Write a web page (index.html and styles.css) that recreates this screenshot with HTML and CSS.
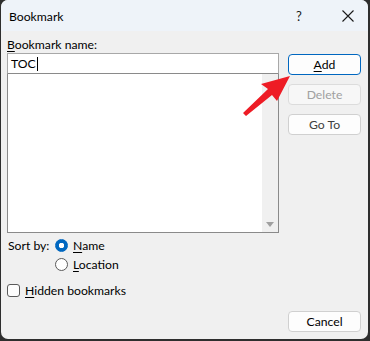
FILE: index.html
```html
<!DOCTYPE html>
<html>
<head>
  <meta charset="utf-8" />
  <title>Bookmark</title>
  <link rel="stylesheet" href="styles.css">
</head>
<body>
<div class="dialog">
  <div class="titlebar">
    <span class="title">Bookmark</span>
    <span class="help">?</span>
    <span class="close">
      <svg width="12" height="12" viewBox="0 0 12 12"><path d="M0.5 0.5 L11.5 11.5 M11.5 0.5 L0.5 11.5" stroke="#1a1a1a" stroke-width="1.1" fill="none"/></svg>
    </span>
  </div>
  <div class="content">
    <div class="main">
      <div class="label"><u>B</u>ookmark name:</div>
      <div class="nameInput">TOC<span class="caret"></span></div>
      <div class="listBox">
        <div class="listArea"></div>
        <div class="scrollbar"><span class="downArrow"></span></div>
      </div>
      <div class="sortBy">
        <div class="sortLabel">Sort by:</div>
        <div class="radios">
          <label class="radio"><span class="radioDot checked"></span><span><u>N</u>ame</span></label>
          <label class="radio"><span class="radioDot"></span><span><u>L</u>ocation</span></label>
        </div>
      </div>
      <label class="check"><span class="checkBox"></span><span><u>H</u>idden bookmarks</span></label>
    </div>
    <div class="buttons">
      <button class="btn primary"><u>A</u>dd</button>
      <button class="btn disabled">Delete</button>
      <button class="btn goto">Go To</button>
      <div class="spacer"></div>
      <button class="btn">Cancel</button>
    </div>
  </div>
</div>
<svg class="arrow" width="370" height="341" viewBox="0 0 370 341">
  <polygon points="290,76 261,84 268,89 243,113 246,116 272,95 277,101" fill="#ee1c25"/>
</svg>
</body>
</html>
```

FILE: styles.css
```css
body {
  margin: 0;
  background: #2e2e2e;
  font-family: Lato, "Noto Sans", sans-serif;
  font-size: 12.2px;
  color: #000;
}

.dialog {
  width: 367px;
  height: 339px;
  margin-left: 1px;
  background: #f0f0f0;
  border-radius: 7px;
  overflow: hidden;
  display: flex;
  flex-direction: column;
}

.titlebar {
  height: 31px;
  flex: none;
  background: #eef3f9;
  display: flex;
  align-items: center;
  padding-left: 8px;
}

.title {
  flex: 1;
  padding-top: 1px;
}

.help {
  font-size: 13px;
  width: 12px;
  margin-right: 34px;
  color: #1a1a1a;
}

.close {
  width: 12px;
  height: 12px;
  margin-right: 14px;
  display: flex;
}

.content {
  flex: 1;
  display: flex;
  padding: 6px 6px 7px 6px;
  gap: 9px;
}

.main {
  width: 272px;
  display: flex;
  flex-direction: column;
}

.label {
  height: 16px;
  line-height: 16px;
}

u {
  text-decoration-thickness: 1px;
  text-underline-offset: 2px;
}

.nameInput {
  height: 19px;
  background: #fff;
  border: 1px solid #a8a8a8;
  border-bottom-color: #8a8a8a;
  line-height: 19px;
  padding-left: 3px;
  display: flex;
  align-items: center;
}

.caret {
  width: 1px;
  height: 14px;
  background: #000;
  margin-left: 1px;
}

.listBox {
  height: 158px;
  border: 1px solid #8a8a8a;
  border-top: none;
  display: flex;
}

.listArea {
  flex: 1;
  background: #fff;
}

.scrollbar {
  width: 16px;
  background: #f0f0f0;
  display: flex;
  align-items: flex-end;
  justify-content: center;
  padding-bottom: 5px;
  box-sizing: border-box;
}

.downArrow {
  width: 0;
  height: 0;
  border-left: 4px solid transparent;
  border-right: 4px solid transparent;
  border-top: 5px solid #a0a0a0;
}

.sortBy {
  display: flex;
  margin-top: 3px;
  margin-left: 1px;
}

.sortLabel {
  width: 47px;
  line-height: 19px;
}

.radios {
  display: flex;
  flex-direction: column;
}

.radio {
  display: flex;
  align-items: center;
  gap: 5px;
  height: 19px;
}

.radioDot {
  width: 11px;
  height: 11px;
  border: 1px solid #5a5a5a;
  border-radius: 50%;
  box-sizing: content-box;
  background: #fff;
}

.radioDot.checked {
  border-color: #0067c0;
  background: radial-gradient(circle, #fff 0 2.5px, #0067c0 3px);
}

.check {
  display: flex;
  align-items: center;
  gap: 5px;
  margin-top: 7px;
  height: 19px;
}

.checkBox {
  width: 11px;
  height: 11px;
  border: 1px solid #5a5a5a;
  border-radius: 3px;
  background: #fdfdfd;
}

.buttons {
  width: 73px;
  display: flex;
  flex-direction: column;
  padding-top: 17px;
  gap: 9px;
}

.btn {
  height: 21px;
  font-family: inherit;
  font-size: 12.2px;
  background: #fdfdfd;
  border: 1px solid #d0d0d0;
  border-radius: 4px;
  color: #000;
  padding: 0;
}

.btn.primary {
  border-color: #0067c0;
}

.btn.disabled {
  color: #a0a0a0;
  border-color: #dcdcdc;
  background: #f7f7f7;
}

.btn.goto {
  color: #404040;
}

.spacer {
  flex: 1;
}

.arrow {
  position: absolute;
  left: 0;
  top: 0;
  pointer-events: none;
}
```
